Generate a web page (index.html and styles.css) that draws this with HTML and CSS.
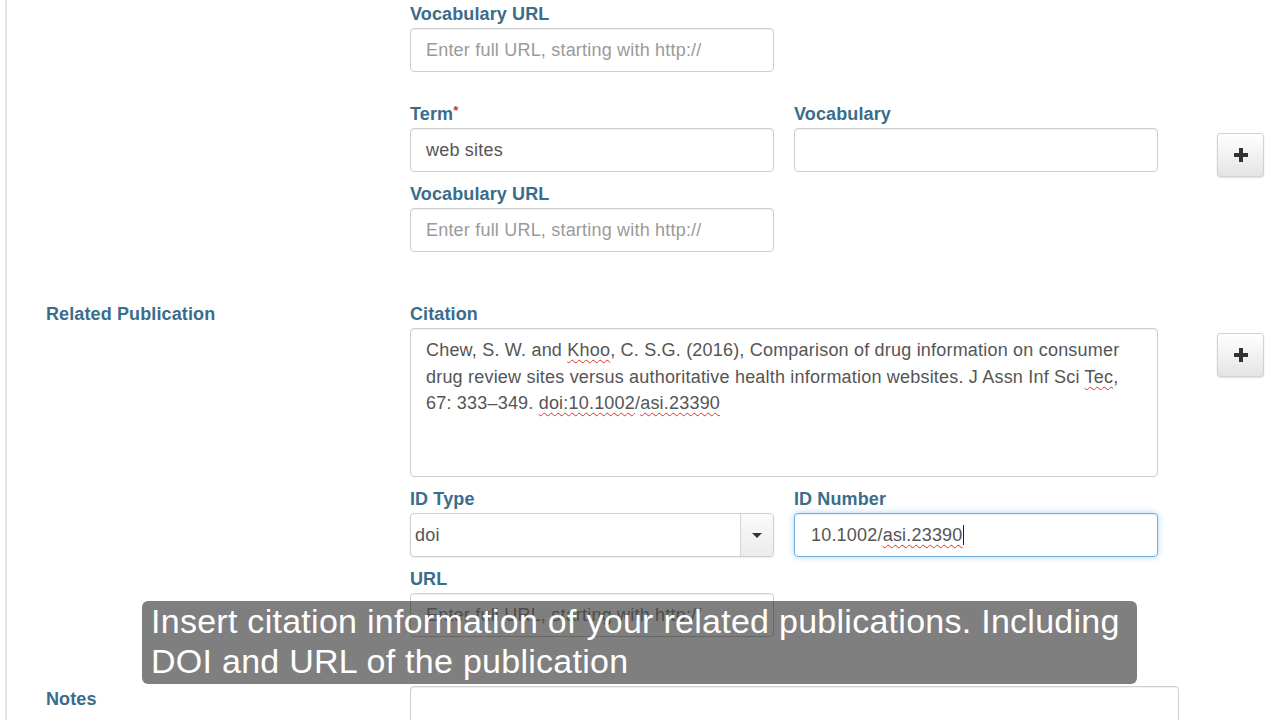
FILE: index.html
```html
<!DOCTYPE html>
<html lang="en">
<head>
<meta charset="utf-8">
<title>Related Publication</title>
<link rel="stylesheet" href="styles.css">
</head>
<body>
<div class="page">
  <div class="row entry-partial">
    <div class="col-label"></div>
    <div class="col-fields">
      <div class="field half">
        <div class="lbl">Vocabulary URL</div>
        <div class="ctl placeholder">Enter full URL, starting with http://</div>
      </div>
    </div>
    <div class="col-add"></div>
  </div>

  <div class="row entry">
    <div class="col-label"></div>
    <div class="col-fields">
      <div class="pair">
        <div class="field">
          <div class="lbl">Term<span class="req">*</span></div>
          <div class="ctl">web sites</div>
        </div>
        <div class="field">
          <div class="lbl">Vocabulary</div>
          <div class="ctl"></div>
        </div>
      </div>
      <div class="field half">
        <div class="lbl">Vocabulary URL</div>
        <div class="ctl placeholder">Enter full URL, starting with http://</div>
      </div>
    </div>
    <div class="col-add">
      <button class="add-btn" type="button" aria-label="Add">
        <svg width="16" height="16" viewBox="0 0 16 16"><rect x="6" y="1" width="4" height="14" fill="#333"/><rect x="1" y="6" width="14" height="4" fill="#333"/></svg>
      </button>
    </div>
  </div>

  <div class="row section">
    <div class="col-label"><div class="section-title">Related Publication</div></div>
    <div class="col-fields">
      <div class="field">
        <div class="lbl">Citation</div>
        <div class="ctl area">Chew, S. W. and <span class="sp">Khoo</span>, C. S.G. (2016), Comparison of drug information on consumer<br>drug review sites versus authoritative health information websites. J Assn Inf Sci <span class="sp">Tec</span>,<br>67: 333–349. <span class="sp">doi:10.1002</span>/<span class="sp">asi.23390</span></div>
      </div>
      <div class="pair">
        <div class="field">
          <div class="lbl">ID Type</div>
          <div class="ctl select"><span class="sel-val">doi</span><span class="sel-toggle"><span class="caret-down"></span></span></div>
        </div>
        <div class="field">
          <div class="lbl">ID Number</div>
          <div class="ctl focus">10.1002/<span class="sp">asi.23390</span><span class="cursor"></span></div>
        </div>
      </div>
      <div class="field half">
        <div class="lbl">URL</div>
        <div class="ctl placeholder">Enter full URL, starting with http://</div>
      </div>
    </div>
    <div class="col-add">
      <button class="add-btn" type="button" aria-label="Add">
        <svg width="16" height="16" viewBox="0 0 16 16"><rect x="6" y="1" width="4" height="14" fill="#333"/><rect x="1" y="6" width="14" height="4" fill="#333"/></svg>
      </button>
    </div>
  </div>

  <div class="row notes">
    <div class="col-label"><div class="section-title notes-title">Notes</div></div>
    <div class="col-wide">
      <div class="ctl notes-area"></div>
    </div>
  </div>

  <div class="caption">Insert citation information of your related publications. Including<br>DOI and URL of the publication</div>
</div>
</body>
</html>
```

FILE: styles.css
```css
html, body {
  margin: 0;
  padding: 0;
  background: #fff;
  height: 720px;
  overflow: hidden;
}

body {
  font-family: "Liberation Sans", Arial, sans-serif;
  color: #555;
}

.page {
  position: relative;
  margin-left: 5px;
  border-left: 2px solid #e4e4e4;
  height: 720px;
  overflow: hidden;
  padding-top: 4px;
  box-sizing: border-box;
}

.row {
  display: grid;
  grid-template-columns: 344px 748px 47px;
  column-gap: 59px;
  align-items: start;
}

.entry-partial { margin-bottom: 32px; }
.entry { margin-bottom: 52px; }
.section { margin-bottom: 49px; }

.col-label {
  padding-left: 39px;
}

.col-fields {
  display: flex;
  flex-direction: column;
  gap: 12px;
}

.col-wide {
  grid-column: 2 / span 2;
}

.pair {
  display: grid;
  grid-template-columns: 364px 364px;
  column-gap: 20px;
}

.field {
  display: flex;
  flex-direction: column;
  gap: 4px;
}

.field.half {
  width: 364px;
}

.lbl,
.section-title {
  font-size: 18px;
  line-height: 20px;
  height: 20px;
  font-weight: bold;
  color: #3a6c8c;
  letter-spacing: 0.12px;
}

.notes-title {
  margin-top: 3px;
}

.req {
  color: #b0413e;
  font-size: 13px;
  line-height: 0;
  position: relative;
  top: -5px;
}

.ctl {
  box-sizing: border-box;
  height: 44px;
  border: 1px solid #cfcfcf;
  border-radius: 4px;
  padding: 11px 15px;
  font-size: 18px;
  line-height: 20px;
  letter-spacing: 0.2px;
  color: #555;
  background: #fff;
  box-shadow: inset 0 1px 1px rgba(0, 0, 0, 0.06);
  white-space: nowrap;
}

.placeholder {
  color: #9a9a9a;
}

.area {
  height: 149px;
  padding: 8px 15px;
  line-height: 26.5px;
}

.sp {
  text-decoration: underline wavy #d9302c;
  text-decoration-thickness: 1px;
  text-underline-offset: 3px;
  text-decoration-skip-ink: none;
}

.select {
  display: flex;
  align-items: stretch;
  padding: 0;
  overflow: hidden;
  box-shadow: 0 1px 2px rgba(0, 0, 0, 0.08);
}

.sel-val {
  flex: 1;
  padding: 11px 4px;
  color: #555;
}

.sel-toggle {
  width: 32px;
  border-left: 1px solid #d6d6d6;
  background: linear-gradient(#fafafa, #ececec);
  display: flex;
  align-items: center;
  justify-content: center;
}

.caret-down {
  width: 0;
  height: 0;
  border-left: 5px solid transparent;
  border-right: 5px solid transparent;
  border-top: 5px solid #333;
}

.focus {
  border-color: #74b1e3;
  box-shadow: inset 0 1px 1px rgba(0, 0, 0, 0.075), 0 0 6px rgba(102, 175, 233, 0.55);
  padding-left: 16px;
}

.cursor {
  display: inline-block;
  width: 0;
  height: 20px;
  border-left: 1px solid #222;
  vertical-align: -4px;
}

.add-btn {
  margin-top: 29px;
  width: 47px;
  height: 44px;
  border: 1px solid #d2d2d2;
  border-radius: 3px;
  background: linear-gradient(#ffffff, #e4e4e4);
  box-shadow: 0 1px 2px rgba(0, 0, 0, 0.12);
  display: flex;
  align-items: center;
  justify-content: center;
  padding: 0;
}

.notes-area {
  width: 769px;
  height: 80px;
}

.caption {
  position: absolute;
  left: 135px;
  top: 601px;
  width: 995px;
  height: 83px;
  box-sizing: border-box;
  padding: 0 9px;
  border-radius: 6px;
  background: rgba(0, 0, 0, 0.5);
  color: #fff;
  font-size: 34px;
  line-height: 40px;
  letter-spacing: 0.27px;
  white-space: nowrap;
}
```
